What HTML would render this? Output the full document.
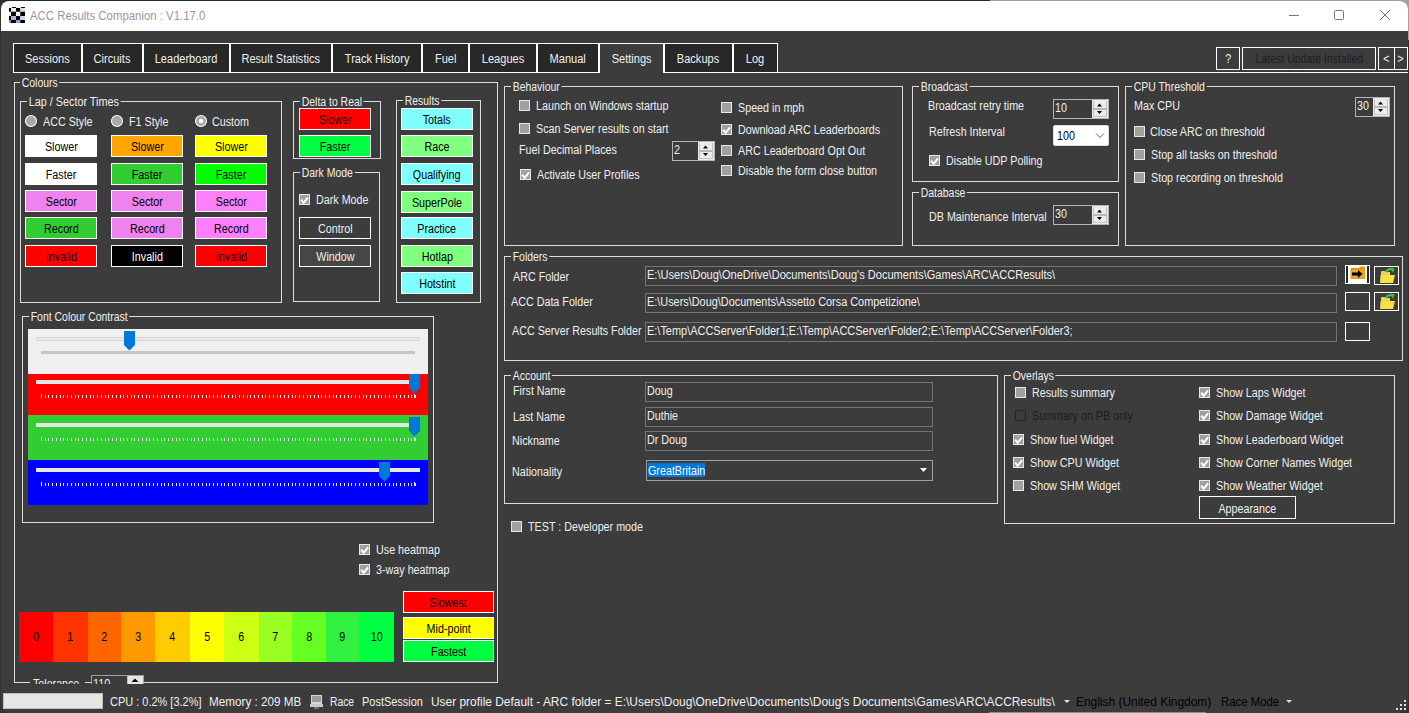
<!DOCTYPE html><html><head><meta charset="utf-8"><style>
html,body{margin:0;padding:0;width:1409px;height:713px;overflow:hidden;background:#2a2e33}
#w div{position:absolute}
.t{white-space:nowrap;font-family:"Liberation Sans",sans-serif;color:#f0f0f0;}
svg{position:absolute}
</style></head><body><div id="w" style="position:absolute;left:0;top:0;width:1409px;height:713px">
<div style="left:0px;top:0px;width:1409px;height:713px;background:#333"></div>
<div style="left:0px;top:0px;width:990px;height:1px;background:#262a26"></div>
<div style="left:990px;top:0px;width:419px;height:1px;background:#98a2b0"></div>
<div style="left:1389px;top:0px;width:20px;height:40px;background:#98a2b0"></div>
<div style="left:1px;top:1px;width:1407px;height:712px;background:#3c3c3c;border-radius:8px 8px 8px 8px;overflow:hidden"></div>
<div style="left:1px;top:1px;width:1407px;height:30px;background:#fff;border-radius:8px 8px 0 0"></div>
<svg style="left:9px;top:7px" width="16" height="16"><rect width="16" height="16" fill="#eef0fa"/><rect x="0" y="1" width="2" height="3.7" fill="#000"/><rect x="7" y="1" width="4.3" height="3.7" fill="#000"/><rect x="3" y="0" width="4" height="1" fill="#111"/><rect x="12" y="0" width="4" height="1" fill="#111"/><rect x="11.3" y="1" width="4.7" height="3.7" fill="#d4def0"/><rect x="2" y="4.7" width="5" height="4.3" fill="#000"/><rect x="11.3" y="4.7" width="4.7" height="4.3" fill="#000"/><rect x="0" y="9" width="2" height="4" fill="#000"/><rect x="7" y="9" width="4.3" height="4" fill="#000"/><rect x="2" y="9" width="5" height="4" fill="#a8b8cc"/><rect x="11.3" y="9" width="4.7" height="4" fill="#c8d8f0"/><rect x="0" y="13" width="2" height="3" fill="#7898b8"/><rect x="2" y="13" width="5" height="3" fill="#000"/><rect x="7" y="13" width="4.3" height="3" fill="#90a8c0"/><rect x="11.3" y="13" width="4.7" height="3" fill="#000"/></svg>
<div class="t" style="left:30px;top:8.0px;line-height:16px;font-size:12.5px;transform:scaleX(0.911);transform-origin:0 0;color:#999">ACC Results Companion : V1.17.0</div>
<div style="left:1289px;top:15px;width:10px;height:1px;background:#777"></div>
<div style="left:1334px;top:10px;width:10px;height:10px;border:1px solid #777;box-sizing:border-box;border-radius:1.5px"></div>
<svg style="left:1379px;top:9px" width="12" height="12"><path d="M1 1 L11 11 M11 1 L1 11" stroke="#777" stroke-width="1"/></svg>
<div style="left:13px;top:72px;width:1395px;height:1px;background:#fff"></div>
<div style="left:13px;top:43px;width:69px;height:30px;background:#282828;border:1px solid #fff;box-sizing:border-box"></div>
<div class="t" style="left:13px;width:69px;text-align:center;top:51.0px;line-height:16px;font-size:12px;"><span style="display:inline-block;transform:scaleX(0.92)">Sessions</span></div>
<div style="left:82px;top:43px;width:61px;height:30px;background:#282828;border:1px solid #fff;box-sizing:border-box"></div>
<div class="t" style="left:82px;width:61px;text-align:center;top:51.0px;line-height:16px;font-size:12px;"><span style="display:inline-block;transform:scaleX(0.92)">Circuits</span></div>
<div style="left:143px;top:43px;width:87px;height:30px;background:#282828;border:1px solid #fff;box-sizing:border-box"></div>
<div class="t" style="left:143px;width:87px;text-align:center;top:51.0px;line-height:16px;font-size:12px;"><span style="display:inline-block;transform:scaleX(0.92)">Leaderboard</span></div>
<div style="left:230px;top:43px;width:102px;height:30px;background:#282828;border:1px solid #fff;box-sizing:border-box"></div>
<div class="t" style="left:230px;width:102px;text-align:center;top:51.0px;line-height:16px;font-size:12px;"><span style="display:inline-block;transform:scaleX(0.92)">Result Statistics</span></div>
<div style="left:332px;top:43px;width:90px;height:30px;background:#282828;border:1px solid #fff;box-sizing:border-box"></div>
<div class="t" style="left:332px;width:90px;text-align:center;top:51.0px;line-height:16px;font-size:12px;"><span style="display:inline-block;transform:scaleX(0.92)">Track History</span></div>
<div style="left:422px;top:43px;width:47px;height:30px;background:#282828;border:1px solid #fff;box-sizing:border-box"></div>
<div class="t" style="left:422px;width:47px;text-align:center;top:51.0px;line-height:16px;font-size:12px;"><span style="display:inline-block;transform:scaleX(0.92)">Fuel</span></div>
<div style="left:469px;top:43px;width:68px;height:30px;background:#282828;border:1px solid #fff;box-sizing:border-box"></div>
<div class="t" style="left:469px;width:68px;text-align:center;top:51.0px;line-height:16px;font-size:12px;"><span style="display:inline-block;transform:scaleX(0.92)">Leagues</span></div>
<div style="left:537px;top:43px;width:62px;height:30px;background:#282828;border:1px solid #fff;box-sizing:border-box"></div>
<div class="t" style="left:537px;width:62px;text-align:center;top:51.0px;line-height:16px;font-size:12px;"><span style="display:inline-block;transform:scaleX(0.92)">Manual</span></div>
<div style="left:599px;top:43px;width:65px;height:30px;background:#3c3c3c;border:1px solid #fff;border-bottom:none;box-sizing:border-box"></div>
<div class="t" style="left:599px;width:65px;text-align:center;top:51.0px;line-height:16px;font-size:12px;"><span style="display:inline-block;transform:scaleX(0.92)">Settings</span></div>
<div style="left:664px;top:43px;width:69px;height:30px;background:#282828;border:1px solid #fff;box-sizing:border-box"></div>
<div class="t" style="left:664px;width:69px;text-align:center;top:51.0px;line-height:16px;font-size:12px;"><span style="display:inline-block;transform:scaleX(0.92)">Backups</span></div>
<div style="left:733px;top:43px;width:45px;height:30px;background:#282828;border:1px solid #fff;box-sizing:border-box"></div>
<div class="t" style="left:733px;width:45px;text-align:center;top:51.0px;line-height:16px;font-size:12px;"><span style="display:inline-block;transform:scaleX(0.92)">Log</span></div>
<div style="left:1216px;top:47px;width:24px;height:23px;border:1px solid #fff;box-sizing:border-box"></div>
<div class="t" style="left:1216px;width:24px;text-align:center;top:51.0px;line-height:16px;font-size:12px;"><span style="display:inline-block;transform:scaleX(0.895)">?</span></div>
<div style="left:1242px;top:47px;width:134px;height:23px;border:1px solid #fff;box-sizing:border-box"></div>
<div class="t" style="left:1242px;width:134px;text-align:center;top:51.0px;line-height:16px;font-size:12px;color:#1e1e1e"><span style="display:inline-block;transform:scaleX(0.875)">Latest Update Installed</span></div>
<div style="left:1378px;top:47px;width:17px;height:23px;border:1px solid #fff;box-sizing:border-box"></div>
<div style="left:1394px;top:47px;width:14px;height:23px;border:1px solid #fff;box-sizing:border-box"></div>
<div class="t" style="left:1378px;width:17px;text-align:center;top:51.0px;line-height:16px;font-size:12px;"><span style="display:inline-block;transform:scaleX(0.895)">&lt;</span></div>
<div class="t" style="left:1394px;width:14px;text-align:center;top:51.0px;line-height:16px;font-size:12px;"><span style="display:inline-block;transform:scaleX(0.895)">&gt;</span></div>
<div style="left:14px;top:82px;width:484px;height:601px;border:1px solid #dcdcdc;border-bottom:none;box-sizing:border-box"></div>
<div class="t" style="left:20px;top:75.0px;line-height:16px;font-size:12px;transform:scaleX(0.87);transform-origin:0 0;"><span style="background:#3c3c3c;padding:0 2px">Colours</span></div>
<div style="left:20px;top:101px;width:262px;height:202px;border:1px solid #dcdcdc;box-sizing:border-box"></div>
<div class="t" style="left:27px;top:94.0px;line-height:16px;font-size:12px;transform:scaleX(0.9);transform-origin:0 0;"><span style="background:#3c3c3c;padding:0 2px">Lap / Sector Times</span></div>
<svg style="position:absolute;left:24px;top:114px" width="14" height="14"><circle cx="7" cy="7" r="5.5" fill="#a8a8a8" stroke="#fff" stroke-width="1.1"/></svg>
<div class="t" style="left:43px;top:114.0px;line-height:16px;font-size:12px;transform:scaleX(0.895);transform-origin:0 0;">ACC Style</div>
<svg style="position:absolute;left:110px;top:114px" width="14" height="14"><circle cx="7" cy="7" r="5.5" fill="#a8a8a8" stroke="#fff" stroke-width="1.1"/></svg>
<div class="t" style="left:129px;top:114.0px;line-height:16px;font-size:12px;transform:scaleX(0.895);transform-origin:0 0;">F1 Style</div>
<svg style="position:absolute;left:194px;top:114px" width="14" height="14"><circle cx="7" cy="7" r="5.5" fill="#a8a8a8" stroke="#fff" stroke-width="1.1"/><circle cx="7" cy="7" r="2.2" fill="#fff"/></svg>
<div class="t" style="left:212px;top:114.0px;line-height:16px;font-size:12px;transform:scaleX(0.895);transform-origin:0 0;">Custom</div>
<div style="left:25px;top:135px;width:72px;height:22px;background:#ffffff;border:1px solid #fff;box-sizing:border-box"></div>
<div class="t" style="left:25px;width:72px;text-align:center;top:139.0px;line-height:16px;font-size:12px;color:#000"><span style="display:inline-block;transform:scaleX(0.895)">Slower</span></div>
<div style="left:25px;top:163px;width:72px;height:22px;background:#ffffff;border:1px solid #fff;box-sizing:border-box"></div>
<div class="t" style="left:25px;width:72px;text-align:center;top:167.0px;line-height:16px;font-size:12px;color:#000"><span style="display:inline-block;transform:scaleX(0.895)">Faster</span></div>
<div style="left:25px;top:190px;width:72px;height:22px;background:#ee82ee;border:1px solid #fff;box-sizing:border-box"></div>
<div class="t" style="left:25px;width:72px;text-align:center;top:194.0px;line-height:16px;font-size:12px;color:#000"><span style="display:inline-block;transform:scaleX(0.895)">Sector</span></div>
<div style="left:25px;top:217px;width:72px;height:22px;background:#32cd32;border:1px solid #fff;box-sizing:border-box"></div>
<div class="t" style="left:25px;width:72px;text-align:center;top:221.0px;line-height:16px;font-size:12px;color:#000"><span style="display:inline-block;transform:scaleX(0.895)">Record</span></div>
<div style="left:25px;top:245px;width:72px;height:22px;background:#ff0000;border:1px solid #fff;box-sizing:border-box"></div>
<div class="t" style="left:25px;width:72px;text-align:center;top:249.0px;line-height:16px;font-size:12px;color:#000"><span style="display:inline-block;transform:scaleX(0.895)">Invalid</span></div>
<div style="left:111px;top:135px;width:72px;height:22px;background:#ffa500;border:1px solid #fff;box-sizing:border-box"></div>
<div class="t" style="left:111px;width:72px;text-align:center;top:139.0px;line-height:16px;font-size:12px;color:#000"><span style="display:inline-block;transform:scaleX(0.895)">Slower</span></div>
<div style="left:111px;top:163px;width:72px;height:22px;background:#32cd32;border:1px solid #fff;box-sizing:border-box"></div>
<div class="t" style="left:111px;width:72px;text-align:center;top:167.0px;line-height:16px;font-size:12px;color:#000"><span style="display:inline-block;transform:scaleX(0.895)">Faster</span></div>
<div style="left:111px;top:190px;width:72px;height:22px;background:#ee82ee;border:1px solid #fff;box-sizing:border-box"></div>
<div class="t" style="left:111px;width:72px;text-align:center;top:194.0px;line-height:16px;font-size:12px;color:#000"><span style="display:inline-block;transform:scaleX(0.895)">Sector</span></div>
<div style="left:111px;top:217px;width:72px;height:22px;background:#ee82ee;border:1px solid #fff;box-sizing:border-box"></div>
<div class="t" style="left:111px;width:72px;text-align:center;top:221.0px;line-height:16px;font-size:12px;color:#000"><span style="display:inline-block;transform:scaleX(0.895)">Record</span></div>
<div style="left:111px;top:245px;width:72px;height:22px;background:#000000;border:1px solid #fff;box-sizing:border-box"></div>
<div class="t" style="left:111px;width:72px;text-align:center;top:249.0px;line-height:16px;font-size:12px;color:#fff"><span style="display:inline-block;transform:scaleX(0.895)">Invalid</span></div>
<div style="left:195px;top:135px;width:72px;height:22px;background:#ffff00;border:1px solid #fff;box-sizing:border-box"></div>
<div class="t" style="left:195px;width:72px;text-align:center;top:139.0px;line-height:16px;font-size:12px;color:#000"><span style="display:inline-block;transform:scaleX(0.895)">Slower</span></div>
<div style="left:195px;top:163px;width:72px;height:22px;background:#00ff00;border:1px solid #fff;box-sizing:border-box"></div>
<div class="t" style="left:195px;width:72px;text-align:center;top:167.0px;line-height:16px;font-size:12px;color:#000"><span style="display:inline-block;transform:scaleX(0.895)">Faster</span></div>
<div style="left:195px;top:190px;width:72px;height:22px;background:#ff80ff;border:1px solid #fff;box-sizing:border-box"></div>
<div class="t" style="left:195px;width:72px;text-align:center;top:194.0px;line-height:16px;font-size:12px;color:#000"><span style="display:inline-block;transform:scaleX(0.895)">Sector</span></div>
<div style="left:195px;top:217px;width:72px;height:22px;background:#ff80ff;border:1px solid #fff;box-sizing:border-box"></div>
<div class="t" style="left:195px;width:72px;text-align:center;top:221.0px;line-height:16px;font-size:12px;color:#000"><span style="display:inline-block;transform:scaleX(0.895)">Record</span></div>
<div style="left:195px;top:245px;width:72px;height:22px;background:#ff0000;border:1px solid #fff;box-sizing:border-box"></div>
<div class="t" style="left:195px;width:72px;text-align:center;top:249.0px;line-height:16px;font-size:12px;color:#000"><span style="display:inline-block;transform:scaleX(0.895)">Invalid</span></div>
<div style="left:293px;top:101px;width:88px;height:58px;border:1px solid #dcdcdc;box-sizing:border-box"></div>
<div class="t" style="left:300px;top:94.0px;line-height:16px;font-size:12px;transform:scaleX(0.87);transform-origin:0 0;"><span style="background:#3c3c3c;padding:0 2px">Delta to Real</span></div>
<div style="left:299px;top:108px;width:72px;height:22px;background:#ff0000;border:1px solid #fff;box-sizing:border-box"></div>
<div class="t" style="left:299px;width:72px;text-align:center;top:112.0px;line-height:16px;font-size:12px;color:#000"><span style="display:inline-block;transform:scaleX(0.895)">Slower</span></div>
<div style="left:299px;top:135px;width:72px;height:22px;background:#00ff40;border:1px solid #fff;box-sizing:border-box"></div>
<div class="t" style="left:299px;width:72px;text-align:center;top:139.0px;line-height:16px;font-size:12px;color:#000"><span style="display:inline-block;transform:scaleX(0.895)">Faster</span></div>
<div style="left:293px;top:172px;width:87px;height:130px;border:1px solid #dcdcdc;box-sizing:border-box"></div>
<div class="t" style="left:300px;top:165.0px;line-height:16px;font-size:12px;transform:scaleX(0.87);transform-origin:0 0;"><span style="background:#3c3c3c;padding:0 2px">Dark Mode</span></div>
<div style="left:299px;top:194px;width:11px;height:11px;background:#a0a0a0;border:1px solid #e8e8e8;box-sizing:border-box"></div>
<svg style="position:absolute;left:299px;top:194px" width="11" height="11"><path d="M2.2 5.6 L4.6 8.8 L9 3.3" stroke="#fff" stroke-width="2" fill="none"/></svg>
<div class="t" style="left:316px;top:192.0px;line-height:16px;font-size:12px;transform:scaleX(0.895);transform-origin:0 0;">Dark Mode</div>
<div style="left:299px;top:217px;width:72px;height:22px;background:#3c3c3c;border:1px solid #fff;box-sizing:border-box"></div>
<div class="t" style="left:299px;width:72px;text-align:center;top:221.0px;line-height:16px;font-size:12px;color:#f0f0f0"><span style="display:inline-block;transform:scaleX(0.895)">Control</span></div>
<div style="left:299px;top:245px;width:72px;height:22px;background:#464646;border:1px solid #fff;box-sizing:border-box"></div>
<div class="t" style="left:299px;width:72px;text-align:center;top:249.0px;line-height:16px;font-size:12px;color:#f0f0f0"><span style="display:inline-block;transform:scaleX(0.895)">Window</span></div>
<div style="left:396px;top:100px;width:85px;height:203px;border:1px solid #dcdcdc;box-sizing:border-box"></div>
<div class="t" style="left:403px;top:93.0px;line-height:16px;font-size:12px;transform:scaleX(0.87);transform-origin:0 0;"><span style="background:#3c3c3c;padding:0 2px">Results</span></div>
<div style="left:401px;top:108px;width:72px;height:22px;background:#80ffff;border:1px solid #fff;box-sizing:border-box"></div>
<div class="t" style="left:401px;width:72px;text-align:center;top:112.0px;line-height:16px;font-size:12px;color:#000"><span style="display:inline-block;transform:scaleX(0.895)">Totals</span></div>
<div style="left:401px;top:135px;width:72px;height:22px;background:#80ff80;border:1px solid #fff;box-sizing:border-box"></div>
<div class="t" style="left:401px;width:72px;text-align:center;top:139.0px;line-height:16px;font-size:12px;color:#000"><span style="display:inline-block;transform:scaleX(0.895)">Race</span></div>
<div style="left:401px;top:163px;width:72px;height:22px;background:#80ffff;border:1px solid #fff;box-sizing:border-box"></div>
<div class="t" style="left:401px;width:72px;text-align:center;top:167.0px;line-height:16px;font-size:12px;color:#000"><span style="display:inline-block;transform:scaleX(0.895)">Qualifying</span></div>
<div style="left:401px;top:191px;width:72px;height:22px;background:#80ff80;border:1px solid #fff;box-sizing:border-box"></div>
<div class="t" style="left:401px;width:72px;text-align:center;top:195.0px;line-height:16px;font-size:12px;color:#000"><span style="display:inline-block;transform:scaleX(0.895)">SuperPole</span></div>
<div style="left:401px;top:217px;width:72px;height:22px;background:#80ffff;border:1px solid #fff;box-sizing:border-box"></div>
<div class="t" style="left:401px;width:72px;text-align:center;top:221.0px;line-height:16px;font-size:12px;color:#000"><span style="display:inline-block;transform:scaleX(0.895)">Practice</span></div>
<div style="left:401px;top:245px;width:72px;height:22px;background:#80ff80;border:1px solid #fff;box-sizing:border-box"></div>
<div class="t" style="left:401px;width:72px;text-align:center;top:249.0px;line-height:16px;font-size:12px;color:#000"><span style="display:inline-block;transform:scaleX(0.895)">Hotlap</span></div>
<div style="left:401px;top:272px;width:72px;height:22px;background:#80ffff;border:1px solid #fff;box-sizing:border-box"></div>
<div class="t" style="left:401px;width:72px;text-align:center;top:276.0px;line-height:16px;font-size:12px;color:#000"><span style="display:inline-block;transform:scaleX(0.895)">Hotstint</span></div>
<div style="left:22px;top:316px;width:412px;height:207px;border:1px solid #dcdcdc;box-sizing:border-box"></div>
<div class="t" style="left:29px;top:309.0px;line-height:16px;font-size:12px;transform:scaleX(0.87);transform-origin:0 0;"><span style="background:#3c3c3c;padding:0 2px">Font Colour Contrast</span></div>
<div style="left:28px;top:329px;width:400px;height:45px;background:#f0f0f0"></div>
<div style="left:28px;top:374px;width:400px;height:41px;background:#ff0000"></div>
<div style="left:28px;top:415px;width:400px;height:45px;background:#32cd32"></div>
<div style="left:28px;top:460px;width:400px;height:45px;background:#0000ff"></div>
<div style="left:36px;top:337px;width:384px;height:4px;background:#e7e7e7;border:1px solid #d6d6d6;box-sizing:border-box"></div>
<div style="left:41px;top:351px;width:374px;height:3px;background:#c4c4c4"></div>
<svg style="left:124px;top:331px" width="11" height="20"><path d="M0 0 H11 V14 L5.5 19.5 L0 14 Z" fill="#0078d7"/></svg>
<div style="left:36px;top:380px;width:384px;height:4px;background:#e4e8e8"></div>
<div style="left:41px;top:395px;width:375px;height:3px;background:repeating-linear-gradient(90deg,#e8ecec 0 1px,transparent 1px 3.74px)"></div>
<div style="left:41px;top:394px;width:1px;height:4px;background:#e8ecec"></div>
<div style="left:414px;top:394px;width:1px;height:4px;background:#e8ecec"></div>
<div style="left:36px;top:423px;width:384px;height:4px;background:#e4e8e8"></div>
<div style="left:41px;top:438px;width:375px;height:3px;background:repeating-linear-gradient(90deg,#e8ecec 0 1px,transparent 1px 3.74px)"></div>
<div style="left:41px;top:437px;width:1px;height:4px;background:#e8ecec"></div>
<div style="left:414px;top:437px;width:1px;height:4px;background:#e8ecec"></div>
<div style="left:36px;top:468px;width:384px;height:4px;background:#e4e8e8"></div>
<div style="left:41px;top:483px;width:375px;height:3px;background:repeating-linear-gradient(90deg,#e8ecec 0 1px,transparent 1px 3.74px)"></div>
<div style="left:41px;top:482px;width:1px;height:4px;background:#e8ecec"></div>
<div style="left:414px;top:482px;width:1px;height:4px;background:#e8ecec"></div>
<svg style="left:409px;top:374px" width="11" height="20"><path d="M0 0 H11 V14 L5.5 19.5 L0 14 Z" fill="#0078d7"/></svg>
<svg style="left:409px;top:417px" width="11" height="20"><path d="M0 0 H11 V14 L5.5 19.5 L0 14 Z" fill="#0078d7"/></svg>
<svg style="left:379px;top:462px" width="11" height="20"><path d="M0 0 H11 V14 L5.5 19.5 L0 14 Z" fill="#0078d7"/></svg>
<div style="left:359px;top:544px;width:11px;height:11px;background:#a0a0a0;border:1px solid #e8e8e8;box-sizing:border-box"></div>
<svg style="position:absolute;left:359px;top:544px" width="11" height="11"><path d="M2.2 5.6 L4.6 8.8 L9 3.3" stroke="#fff" stroke-width="2" fill="none"/></svg>
<div class="t" style="left:376px;top:542.0px;line-height:16px;font-size:12px;transform:scaleX(0.895);transform-origin:0 0;">Use heatmap</div>
<div style="left:359px;top:564px;width:11px;height:11px;background:#a0a0a0;border:1px solid #e8e8e8;box-sizing:border-box"></div>
<svg style="position:absolute;left:359px;top:564px" width="11" height="11"><path d="M2.2 5.6 L4.6 8.8 L9 3.3" stroke="#fff" stroke-width="2" fill="none"/></svg>
<div class="t" style="left:376px;top:562.0px;line-height:16px;font-size:12px;transform:scaleX(0.895);transform-origin:0 0;">3-way heatmap</div>
<div style="left:19px;top:612px;width:34px;height:50px;background:#ff0000"></div>
<div class="t" style="left:19px;width:34px;text-align:center;top:629.0px;line-height:16px;font-size:12px;color:#000"><span style="display:inline-block;transform:scaleX(0.895)">0</span></div>
<div style="left:53px;top:612px;width:35px;height:50px;background:#ff3300"></div>
<div class="t" style="left:53px;width:35px;text-align:center;top:629.0px;line-height:16px;font-size:12px;color:#000"><span style="display:inline-block;transform:scaleX(0.895)">1</span></div>
<div style="left:88px;top:612px;width:33px;height:50px;background:#ff6600"></div>
<div class="t" style="left:88px;width:33px;text-align:center;top:629.0px;line-height:16px;font-size:12px;color:#000"><span style="display:inline-block;transform:scaleX(0.895)">2</span></div>
<div style="left:121px;top:612px;width:34px;height:50px;background:#ff9900"></div>
<div class="t" style="left:121px;width:34px;text-align:center;top:629.0px;line-height:16px;font-size:12px;color:#000"><span style="display:inline-block;transform:scaleX(0.895)">3</span></div>
<div style="left:155px;top:612px;width:35px;height:50px;background:#ffcc00"></div>
<div class="t" style="left:155px;width:35px;text-align:center;top:629.0px;line-height:16px;font-size:12px;color:#000"><span style="display:inline-block;transform:scaleX(0.895)">4</span></div>
<div style="left:190px;top:612px;width:34px;height:50px;background:#ffff00"></div>
<div class="t" style="left:190px;width:34px;text-align:center;top:629.0px;line-height:16px;font-size:12px;color:#000"><span style="display:inline-block;transform:scaleX(0.895)">5</span></div>
<div style="left:224px;top:612px;width:35px;height:50px;background:#ccff11"></div>
<div class="t" style="left:224px;width:35px;text-align:center;top:629.0px;line-height:16px;font-size:12px;color:#000"><span style="display:inline-block;transform:scaleX(0.895)">6</span></div>
<div style="left:259px;top:612px;width:33px;height:50px;background:#99ff22"></div>
<div class="t" style="left:259px;width:33px;text-align:center;top:629.0px;line-height:16px;font-size:12px;color:#000"><span style="display:inline-block;transform:scaleX(0.895)">7</span></div>
<div style="left:292px;top:612px;width:34px;height:50px;background:#66ff22"></div>
<div class="t" style="left:292px;width:34px;text-align:center;top:629.0px;line-height:16px;font-size:12px;color:#000"><span style="display:inline-block;transform:scaleX(0.895)">8</span></div>
<div style="left:326px;top:612px;width:33px;height:50px;background:#30f040"></div>
<div class="t" style="left:326px;width:33px;text-align:center;top:629.0px;line-height:16px;font-size:12px;color:#000"><span style="display:inline-block;transform:scaleX(0.895)">9</span></div>
<div style="left:359px;top:612px;width:35px;height:50px;background:#00ff40"></div>
<div class="t" style="left:359px;width:35px;text-align:center;top:629.0px;line-height:16px;font-size:12px;color:#000"><span style="display:inline-block;transform:scaleX(0.895)">10</span></div>
<div style="left:403px;top:591px;width:91px;height:22px;background:#ff0000;border:1px solid #fff;box-sizing:border-box"></div>
<div class="t" style="left:403px;width:91px;text-align:center;top:595.0px;line-height:16px;font-size:12px;color:#000"><span style="display:inline-block;transform:scaleX(0.895)">Slowest</span></div>
<div style="left:403px;top:617px;width:91px;height:22px;background:#ffff00;border:1px solid #fff;box-sizing:border-box"></div>
<div class="t" style="left:403px;width:91px;text-align:center;top:621.0px;line-height:16px;font-size:12px;color:#000"><span style="display:inline-block;transform:scaleX(0.895)">Mid-point</span></div>
<div style="left:403px;top:640px;width:91px;height:22px;background:#00ff40;border:1px solid #fff;box-sizing:border-box"></div>
<div class="t" style="left:403px;width:91px;text-align:center;top:644.0px;line-height:16px;font-size:12px;color:#000"><span style="display:inline-block;transform:scaleX(0.895)">Fastest</span></div>
<div style="left:0;top:668px;width:500px;height:16px;overflow:hidden">
<div style="left:14px;top:0;width:1px;height:15px;background:#dcdcdc"></div>
<div style="left:14px;top:14px;width:16px;height:1px;background:#dcdcdc"></div>
<div class="t" style="left:33px;top:8px;line-height:16px;font-size:12px;transform:scaleX(0.89);transform-origin:0 0">Tolerance</div>
<div style="left:85px;top:14px;width:6px;height:1px;background:#dcdcdc"></div>
<div style="left:143px;top:14px;width:354px;height:1px;background:#dcdcdc"></div>
<div style="left:497px;top:0;width:1px;height:15px;background:#dcdcdc"></div>
<div style="left:91px;top:7px;width:53px;height:12px;border:1px solid #a0a0a0;box-sizing:border-box"></div>
<div class="t" style="left:93px;top:8px;line-height:16px;font-size:12px;transform:scaleX(0.91);transform-origin:0 0">110</div>
<div style="left:127px;top:8px;width:16px;height:10px;background:#e6e6e6;border-left:1px solid #bbb;box-sizing:border-box"></div>
<svg style="left:127px;top:8px" width="16" height="10"><path d="M4.5 6 L8 2.5 L11.5 6 Z" fill="#000"/></svg>
</div>
<div style="left:504px;top:86px;width:399px;height:160px;border:1px solid #dcdcdc;box-sizing:border-box"></div>
<div class="t" style="left:511px;top:79.0px;line-height:16px;font-size:12px;transform:scaleX(0.87);transform-origin:0 0;"><span style="background:#3c3c3c;padding:0 2px">Behaviour</span></div>
<div style="left:519px;top:100px;width:11px;height:11px;background:#a0a0a0;border:1px solid #e8e8e8;box-sizing:border-box"></div>
<div class="t" style="left:536px;top:98.0px;line-height:16px;font-size:12px;transform:scaleX(0.895);transform-origin:0 0;">Launch on Windows startup</div>
<div style="left:519px;top:123px;width:11px;height:11px;background:#a0a0a0;border:1px solid #e8e8e8;box-sizing:border-box"></div>
<div class="t" style="left:536px;top:121.0px;line-height:16px;font-size:12px;transform:scaleX(0.895);transform-origin:0 0;">Scan Server results on start</div>
<div class="t" style="left:519px;top:142.0px;line-height:16px;font-size:12px;transform:scaleX(0.895);transform-origin:0 0;">Fuel Decimal Places</div>
<div style="left:672px;top:141px;width:43px;height:20px;background:#3c3c3c;border:1px solid #b4b4b4;box-sizing:border-box"></div>
<div class="t" style="left:674px;top:142.0px;line-height:16px;font-size:12px;transform:scaleX(0.895);transform-origin:0 0;">2</div>
<svg style="left:698px;top:141px" width="17" height="20"><rect x="0" y="1" width="16" height="18" fill="#ececec"/><rect x="1" y="2" width="1" height="16" fill="#c0c0c0"/><rect x="14" y="2" width="1" height="16" fill="#c0c0c0"/><rect x="1" y="9.0" width="14" height="2" fill="#b8b8b8"/><rect x="1" y="17" width="14" height="1" fill="#c8c8c8"/><path d="M5 7.5 L7.5 4.5 L10 7.5 Z M5 12.0 L7.5 15.0 L10 12.0 Z" fill="#000"/></svg>
<div style="left:520px;top:169px;width:11px;height:11px;background:#a0a0a0;border:1px solid #e8e8e8;box-sizing:border-box"></div>
<svg style="position:absolute;left:520px;top:169px" width="11" height="11"><path d="M2.2 5.6 L4.6 8.8 L9 3.3" stroke="#fff" stroke-width="2" fill="none"/></svg>
<div class="t" style="left:537px;top:167.0px;line-height:16px;font-size:12px;transform:scaleX(0.895);transform-origin:0 0;">Activate User Profiles</div>
<div style="left:721px;top:102px;width:11px;height:11px;background:#a0a0a0;border:1px solid #e8e8e8;box-sizing:border-box"></div>
<div class="t" style="left:738px;top:100.0px;line-height:16px;font-size:12px;transform:scaleX(0.895);transform-origin:0 0;">Speed in mph</div>
<div style="left:721px;top:124px;width:11px;height:11px;background:#a0a0a0;border:1px solid #e8e8e8;box-sizing:border-box"></div>
<svg style="position:absolute;left:721px;top:124px" width="11" height="11"><path d="M2.2 5.6 L4.6 8.8 L9 3.3" stroke="#fff" stroke-width="2" fill="none"/></svg>
<div class="t" style="left:738px;top:122.0px;line-height:16px;font-size:12px;transform:scaleX(0.895);transform-origin:0 0;">Download ARC Leaderboards</div>
<div style="left:721px;top:145px;width:11px;height:11px;background:#a0a0a0;border:1px solid #e8e8e8;box-sizing:border-box"></div>
<div class="t" style="left:738px;top:143.0px;line-height:16px;font-size:12px;transform:scaleX(0.895);transform-origin:0 0;">ARC Leaderboard Opt Out</div>
<div style="left:721px;top:165px;width:11px;height:11px;background:#a0a0a0;border:1px solid #e8e8e8;box-sizing:border-box"></div>
<div class="t" style="left:738px;top:163.0px;line-height:16px;font-size:12px;transform:scaleX(0.895);transform-origin:0 0;">Disable the form close button</div>
<div style="left:912px;top:86px;width:207px;height:96px;border:1px solid #dcdcdc;box-sizing:border-box"></div>
<div class="t" style="left:919px;top:79.0px;line-height:16px;font-size:12px;transform:scaleX(0.87);transform-origin:0 0;"><span style="background:#3c3c3c;padding:0 2px">Broadcast</span></div>
<div class="t" style="left:928px;top:98.0px;line-height:16px;font-size:12px;transform:scaleX(0.895);transform-origin:0 0;">Broadcast retry time</div>
<div style="left:1053px;top:99px;width:56px;height:20px;background:#3c3c3c;border:1px solid #b4b4b4;box-sizing:border-box"></div>
<div class="t" style="left:1055px;top:100.0px;line-height:16px;font-size:12px;transform:scaleX(0.895);transform-origin:0 0;">10</div>
<svg style="left:1092px;top:99px" width="17" height="20"><rect x="0" y="1" width="16" height="18" fill="#ececec"/><rect x="1" y="2" width="1" height="16" fill="#c0c0c0"/><rect x="14" y="2" width="1" height="16" fill="#c0c0c0"/><rect x="1" y="9.0" width="14" height="2" fill="#b8b8b8"/><rect x="1" y="17" width="14" height="1" fill="#c8c8c8"/><path d="M5 7.5 L7.5 4.5 L10 7.5 Z M5 12.0 L7.5 15.0 L10 12.0 Z" fill="#000"/></svg>
<div class="t" style="left:929px;top:124.0px;line-height:16px;font-size:12px;transform:scaleX(0.895);transform-origin:0 0;">Refresh Interval</div>
<div style="left:1053px;top:125px;width:56px;height:21px;background:#fff;border:1px solid #ddd;box-sizing:border-box;border-radius:2px"></div>
<div class="t" style="left:1057px;top:127.5px;line-height:16px;font-size:12px;transform:scaleX(0.895);transform-origin:0 0;color:#000">100</div>
<svg style="left:1095px;top:132px" width="10" height="8"><path d="M1 1.5 L5 5.5 L9 1.5" stroke="#606060" stroke-width="1" fill="none"/></svg>
<div style="left:929px;top:155px;width:11px;height:11px;background:#a0a0a0;border:1px solid #e8e8e8;box-sizing:border-box"></div>
<svg style="position:absolute;left:929px;top:155px" width="11" height="11"><path d="M2.2 5.6 L4.6 8.8 L9 3.3" stroke="#fff" stroke-width="2" fill="none"/></svg>
<div class="t" style="left:946px;top:153.0px;line-height:16px;font-size:12px;transform:scaleX(0.895);transform-origin:0 0;">Disable UDP Polling</div>
<div style="left:912px;top:192px;width:207px;height:54px;border:1px solid #dcdcdc;box-sizing:border-box"></div>
<div class="t" style="left:919px;top:185.0px;line-height:16px;font-size:12px;transform:scaleX(0.87);transform-origin:0 0;"><span style="background:#3c3c3c;padding:0 2px">Database</span></div>
<div class="t" style="left:929px;top:208.5px;line-height:16px;font-size:12px;transform:scaleX(0.895);transform-origin:0 0;">DB Maintenance Interval</div>
<div style="left:1053px;top:205px;width:56px;height:20px;background:#3c3c3c;border:1px solid #b4b4b4;box-sizing:border-box"></div>
<div class="t" style="left:1055px;top:206.0px;line-height:16px;font-size:12px;transform:scaleX(0.895);transform-origin:0 0;">30</div>
<svg style="left:1092px;top:205px" width="17" height="20"><rect x="0" y="1" width="16" height="18" fill="#ececec"/><rect x="1" y="2" width="1" height="16" fill="#c0c0c0"/><rect x="14" y="2" width="1" height="16" fill="#c0c0c0"/><rect x="1" y="9.0" width="14" height="2" fill="#b8b8b8"/><rect x="1" y="17" width="14" height="1" fill="#c8c8c8"/><path d="M5 7.5 L7.5 4.5 L10 7.5 Z M5 12.0 L7.5 15.0 L10 12.0 Z" fill="#000"/></svg>
<div style="left:1125px;top:86px;width:270px;height:160px;border:1px solid #dcdcdc;box-sizing:border-box"></div>
<div class="t" style="left:1132px;top:79.0px;line-height:16px;font-size:12px;transform:scaleX(0.87);transform-origin:0 0;"><span style="background:#3c3c3c;padding:0 2px">CPU Threshold</span></div>
<div class="t" style="left:1134px;top:98.0px;line-height:16px;font-size:12px;transform:scaleX(0.895);transform-origin:0 0;">Max CPU</div>
<div style="left:1355px;top:97px;width:35px;height:20px;background:#3c3c3c;border:1px solid #b4b4b4;box-sizing:border-box"></div>
<div class="t" style="left:1357px;top:98.0px;line-height:16px;font-size:12px;transform:scaleX(0.895);transform-origin:0 0;">30</div>
<svg style="left:1373px;top:97px" width="17" height="20"><rect x="0" y="1" width="16" height="18" fill="#ececec"/><rect x="1" y="2" width="1" height="16" fill="#c0c0c0"/><rect x="14" y="2" width="1" height="16" fill="#c0c0c0"/><rect x="1" y="9.0" width="14" height="2" fill="#b8b8b8"/><rect x="1" y="17" width="14" height="1" fill="#c8c8c8"/><path d="M5 7.5 L7.5 4.5 L10 7.5 Z M5 12.0 L7.5 15.0 L10 12.0 Z" fill="#000"/></svg>
<div style="left:1134px;top:126px;width:11px;height:11px;background:#a0a0a0;border:1px solid #e8e8e8;box-sizing:border-box"></div>
<div class="t" style="left:1150px;top:124.0px;line-height:16px;font-size:12px;transform:scaleX(0.895);transform-origin:0 0;">Close ARC on threshold</div>
<div style="left:1134px;top:149px;width:11px;height:11px;background:#a0a0a0;border:1px solid #e8e8e8;box-sizing:border-box"></div>
<div class="t" style="left:1151px;top:147.0px;line-height:16px;font-size:12px;transform:scaleX(0.895);transform-origin:0 0;">Stop all tasks on threshold</div>
<div style="left:1134px;top:172px;width:11px;height:11px;background:#a0a0a0;border:1px solid #e8e8e8;box-sizing:border-box"></div>
<div class="t" style="left:1151px;top:170.0px;line-height:16px;font-size:12px;transform:scaleX(0.895);transform-origin:0 0;">Stop recording on threshold</div>
<div style="left:504px;top:256px;width:899px;height:105px;border:1px solid #dcdcdc;box-sizing:border-box"></div>
<div class="t" style="left:511px;top:249.0px;line-height:16px;font-size:12px;transform:scaleX(0.87);transform-origin:0 0;"><span style="background:#3c3c3c;padding:0 2px">Folders</span></div>
<div class="t" style="left:513px;top:268.5px;line-height:16px;font-size:12px;transform:scaleX(0.895);transform-origin:0 0;">ARC Folder</div>
<div class="t" style="left:511px;top:293.5px;line-height:16px;font-size:12px;transform:scaleX(0.895);transform-origin:0 0;">ACC Data Folder</div>
<div class="t" style="left:512px;top:322.5px;line-height:16px;font-size:12px;transform:scaleX(0.895);transform-origin:0 0;">ACC Server Results Folder</div>
<div style="left:645px;top:266px;width:692px;height:20px;background:#3c3c3c;border:1px solid #747474;box-sizing:border-box"></div>
<div class="t" style="left:647px;top:267.0px;line-height:16px;font-size:12px;transform:scaleX(0.921);transform-origin:0 0;">E:\Users\Doug\OneDrive\Documents\Doug's Documents\Games\ARC\ACCResults\</div>
<div style="left:645px;top:293px;width:692px;height:20px;background:#3c3c3c;border:1px solid #747474;box-sizing:border-box"></div>
<div class="t" style="left:647px;top:294.0px;line-height:16px;font-size:12px;transform:scaleX(0.907);transform-origin:0 0;">E:\Users\Doug\Documents\Assetto Corsa Competizione\</div>
<div style="left:645px;top:322px;width:692px;height:20px;background:#3c3c3c;border:1px solid #747474;box-sizing:border-box"></div>
<div class="t" style="left:647px;top:323.0px;line-height:16px;font-size:12px;transform:scaleX(0.913);transform-origin:0 0;">E:\Temp\ACCServer\Folder1;E:\Temp\ACCServer\Folder2;E:\Temp\ACCServer\Folder3;</div>
<div style="left:1345px;top:265px;width:25px;height:19px;background:#fff;border:1px solid #fff;box-sizing:border-box"></div>
<div style="left:1346px;top:266px;width:2px;height:17px;background:#2a2a2a"></div>
<div style="left:1367px;top:266px;width:2px;height:17px;background:#2a2a2a"></div>
<div style="left:1345px;top:292px;width:25px;height:19px;border:1px solid #fff;box-sizing:border-box"></div>
<div style="left:1345px;top:322px;width:25px;height:19px;border:1px solid #fff;box-sizing:border-box"></div>
<svg style="left:1350px;top:266px" width="16" height="14"><path d="M0.5 3 Q0.5 2 1.5 2 H9 L10.5 0.5 H14 Q15 0.5 15 1.5 V12 Q15 13 14 13 H1.5 Q0.5 13 0.5 12 Z" fill="#e89418"/><path d="M1 4 H14.5 V12.5 H1 Z" fill="#f0a428"/><path d="M2 6.5 H8 V4 L12.5 8 L8 12 V9.5 H2 Z" fill="#000"/></svg>
<div style="left:1374px;top:266px;width:25px;height:19px;border:1px solid #fff;box-sizing:border-box"></div>
<svg style="left:1379px;top:267px" width="17" height="17"><path d="M2 5 Q2 4 3 4 H6 L7 5 H11 V15 H2 Z" fill="#f0d060"/><path d="M1.5 8 H16 L14 16 H1 Z" fill="#f8e040"/><path d="M7 5 Q9 1 13 2.5" stroke="#40c040" stroke-width="2.2" fill="none"/><path d="M11.5 0.5 L15.5 1.5 L14 6 Z" fill="#40c040"/></svg>
<div style="left:1374px;top:292px;width:25px;height:19px;border:1px solid #fff;box-sizing:border-box"></div>
<svg style="left:1379px;top:293px" width="17" height="17"><path d="M2 5 Q2 4 3 4 H6 L7 5 H11 V15 H2 Z" fill="#f0d060"/><path d="M1.5 8 H16 L14 16 H1 Z" fill="#f8e040"/><path d="M7 5 Q9 1 13 2.5" stroke="#40c040" stroke-width="2.2" fill="none"/><path d="M11.5 0.5 L15.5 1.5 L14 6 Z" fill="#40c040"/></svg>
<div style="left:504px;top:375px;width:494px;height:129px;border:1px solid #dcdcdc;box-sizing:border-box"></div>
<div class="t" style="left:511px;top:368.0px;line-height:16px;font-size:12px;transform:scaleX(0.87);transform-origin:0 0;"><span style="background:#3c3c3c;padding:0 2px">Account</span></div>
<div class="t" style="left:513px;top:383.0px;line-height:16px;font-size:12px;transform:scaleX(0.895);transform-origin:0 0;">First Name</div>
<div class="t" style="left:513px;top:409.0px;line-height:16px;font-size:12px;transform:scaleX(0.895);transform-origin:0 0;">Last Name</div>
<div class="t" style="left:512px;top:433.0px;line-height:16px;font-size:12px;transform:scaleX(0.895);transform-origin:0 0;">Nickname</div>
<div class="t" style="left:512px;top:463.5px;line-height:16px;font-size:12px;transform:scaleX(0.895);transform-origin:0 0;">Nationality</div>
<div style="left:645px;top:382px;width:288px;height:20px;background:#3c3c3c;border:1px solid #747474;box-sizing:border-box"></div>
<div class="t" style="left:647px;top:383.0px;line-height:16px;font-size:12px;transform:scaleX(0.895);transform-origin:0 0;">Doug</div>
<div style="left:645px;top:407px;width:288px;height:20px;background:#3c3c3c;border:1px solid #747474;box-sizing:border-box"></div>
<div class="t" style="left:647px;top:408.0px;line-height:16px;font-size:12px;transform:scaleX(0.895);transform-origin:0 0;">Duthie</div>
<div style="left:645px;top:431px;width:288px;height:20px;background:#3c3c3c;border:1px solid #747474;box-sizing:border-box"></div>
<div class="t" style="left:647px;top:432.0px;line-height:16px;font-size:12px;transform:scaleX(0.895);transform-origin:0 0;">Dr Doug</div>
<div style="left:646px;top:460px;width:287px;height:21px;background:#3c3c3c;border:1px solid #a0a0a0;box-sizing:border-box"></div>
<div style="left:648px;top:463px;width:57px;height:14px;background:#0078d7"></div>
<div class="t" style="left:648px;top:463.0px;line-height:16px;font-size:12px;transform:scaleX(0.895);transform-origin:0 0;color:#fff">GreatBritain</div>
<svg style="left:920px;top:468px" width="7" height="4"><path d="M0 0 H7 L3.5 4 Z" fill="#fff"/></svg>
<div style="left:511px;top:521px;width:11px;height:11px;background:#a0a0a0;border:1px solid #e8e8e8;box-sizing:border-box"></div>
<div class="t" style="left:528px;top:519.0px;line-height:16px;font-size:12px;transform:scaleX(0.895);transform-origin:0 0;">TEST : Developer mode</div>
<div style="left:1004px;top:375px;width:391px;height:149px;border:1px solid #dcdcdc;box-sizing:border-box"></div>
<div class="t" style="left:1011px;top:368.0px;line-height:16px;font-size:12px;transform:scaleX(0.87);transform-origin:0 0;"><span style="background:#3c3c3c;padding:0 2px">Overlays</span></div>
<div style="left:1015px;top:387px;width:11px;height:11px;background:#a0a0a0;border:1px solid #e8e8e8;box-sizing:border-box"></div>
<div class="t" style="left:1032px;top:385.0px;line-height:16px;font-size:12px;transform:scaleX(0.895);transform-origin:0 0;">Results summary</div>
<div style="left:1015px;top:410px;width:11px;height:11px;border:1px solid #262626;box-sizing:border-box"></div>
<div class="t" style="left:1032px;top:408.0px;line-height:16px;font-size:12px;transform:scaleX(0.895);transform-origin:0 0;color:#1e1e1e">Summary on PB only</div>
<div style="left:1013px;top:434px;width:11px;height:11px;background:#a0a0a0;border:1px solid #e8e8e8;box-sizing:border-box"></div>
<svg style="position:absolute;left:1013px;top:434px" width="11" height="11"><path d="M2.2 5.6 L4.6 8.8 L9 3.3" stroke="#fff" stroke-width="2" fill="none"/></svg>
<div class="t" style="left:1030px;top:432.0px;line-height:16px;font-size:12px;transform:scaleX(0.895);transform-origin:0 0;">Show fuel Widget</div>
<div style="left:1013px;top:457px;width:11px;height:11px;background:#a0a0a0;border:1px solid #e8e8e8;box-sizing:border-box"></div>
<svg style="position:absolute;left:1013px;top:457px" width="11" height="11"><path d="M2.2 5.6 L4.6 8.8 L9 3.3" stroke="#fff" stroke-width="2" fill="none"/></svg>
<div class="t" style="left:1030px;top:455.0px;line-height:16px;font-size:12px;transform:scaleX(0.895);transform-origin:0 0;">Show CPU Widget</div>
<div style="left:1013px;top:480px;width:11px;height:11px;background:#a0a0a0;border:1px solid #e8e8e8;box-sizing:border-box"></div>
<div class="t" style="left:1030px;top:478.0px;line-height:16px;font-size:12px;transform:scaleX(0.895);transform-origin:0 0;">Show SHM Widget</div>
<div style="left:1199px;top:387px;width:11px;height:11px;background:#a0a0a0;border:1px solid #e8e8e8;box-sizing:border-box"></div>
<svg style="position:absolute;left:1199px;top:387px" width="11" height="11"><path d="M2.2 5.6 L4.6 8.8 L9 3.3" stroke="#fff" stroke-width="2" fill="none"/></svg>
<div class="t" style="left:1216px;top:385.0px;line-height:16px;font-size:12px;transform:scaleX(0.895);transform-origin:0 0;">Show Laps Widget</div>
<div style="left:1199px;top:410px;width:11px;height:11px;background:#a0a0a0;border:1px solid #e8e8e8;box-sizing:border-box"></div>
<svg style="position:absolute;left:1199px;top:410px" width="11" height="11"><path d="M2.2 5.6 L4.6 8.8 L9 3.3" stroke="#fff" stroke-width="2" fill="none"/></svg>
<div class="t" style="left:1216px;top:408.0px;line-height:16px;font-size:12px;transform:scaleX(0.895);transform-origin:0 0;">Show Damage Widget</div>
<div style="left:1199px;top:434px;width:11px;height:11px;background:#a0a0a0;border:1px solid #e8e8e8;box-sizing:border-box"></div>
<svg style="position:absolute;left:1199px;top:434px" width="11" height="11"><path d="M2.2 5.6 L4.6 8.8 L9 3.3" stroke="#fff" stroke-width="2" fill="none"/></svg>
<div class="t" style="left:1216px;top:432.0px;line-height:16px;font-size:12px;transform:scaleX(0.895);transform-origin:0 0;">Show Leaderboard Widget</div>
<div style="left:1199px;top:457px;width:11px;height:11px;background:#a0a0a0;border:1px solid #e8e8e8;box-sizing:border-box"></div>
<svg style="position:absolute;left:1199px;top:457px" width="11" height="11"><path d="M2.2 5.6 L4.6 8.8 L9 3.3" stroke="#fff" stroke-width="2" fill="none"/></svg>
<div class="t" style="left:1216px;top:455.0px;line-height:16px;font-size:12px;transform:scaleX(0.895);transform-origin:0 0;">Show Corner Names Widget</div>
<div style="left:1199px;top:480px;width:11px;height:11px;background:#a0a0a0;border:1px solid #e8e8e8;box-sizing:border-box"></div>
<svg style="position:absolute;left:1199px;top:480px" width="11" height="11"><path d="M2.2 5.6 L4.6 8.8 L9 3.3" stroke="#fff" stroke-width="2" fill="none"/></svg>
<div class="t" style="left:1216px;top:478.0px;line-height:16px;font-size:12px;transform:scaleX(0.895);transform-origin:0 0;">Show Weather Widget</div>
<div style="left:1199px;top:496px;width:97px;height:23px;background:#3c3c3c;border:1px solid #fff;box-sizing:border-box"></div>
<div class="t" style="left:1199px;width:97px;text-align:center;top:500.5px;line-height:16px;font-size:12px;color:#f0f0f0"><span style="display:inline-block;transform:scaleX(0.895)">Appearance</span></div>
<div style="left:3px;top:693px;width:100px;height:16px;background:#e6e6e6;border:1px solid #bcbcbc;box-sizing:border-box"></div>
<div class="t" style="left:110px;top:694.0px;line-height:16px;font-size:12px;transform:scaleX(0.914);transform-origin:0 0;">CPU : 0.2% [3.2%]</div>
<div class="t" style="left:209px;top:694.0px;line-height:16px;font-size:12px;transform:scaleX(0.976);transform-origin:0 0;">Memory : 209 MB</div>
<svg style="left:309px;top:694px" width="15" height="16"><rect x="2" y="1" width="11" height="9" fill="#d8d8d8"/><rect x="3" y="2" width="9" height="6" fill="#9a9a9a"/><rect x="1" y="10" width="13" height="3" fill="#c8c8c8"/><rect x="5" y="13" width="5" height="2" fill="#707070"/></svg>
<div class="t" style="left:330px;top:694.0px;line-height:16px;font-size:12px;transform:scaleX(0.86);transform-origin:0 0;">Race</div>
<div class="t" style="left:362px;top:694.0px;line-height:16px;font-size:12px;transform:scaleX(0.913);transform-origin:0 0;">PostSession</div>
<div class="t" style="left:431px;top:694.0px;line-height:16px;font-size:12px;transform:scaleX(0.993);transform-origin:0 0;">User profile Default - ARC folder = E:\Users\Doug\OneDrive\Documents\Doug's Documents\Games\ARC\ACCResults\</div>
<svg style="left:1064px;top:700px" width="7" height="4"><path d="M0 0 H6 L3 3 Z" fill="#e0e0e0"/></svg>
<div class="t" style="left:1076px;top:694.0px;line-height:16px;font-size:12px;transform:scaleX(0.994);transform-origin:0 0;color:#000">English (United Kingdom)</div>
<div class="t" style="left:1221px;top:694.0px;line-height:16px;font-size:12px;transform:scaleX(0.948);transform-origin:0 0;color:#000">Race Mode</div>
<svg style="left:1286px;top:700px" width="7" height="4"><path d="M0 0 H6 L3 3 Z" fill="#e0e0e0"/></svg>
<div style="left:989px;top:712px;width:217px;height:1px;background:#8c8c8c"></div>
<div style="left:1404px;top:700px;width:2px;height:2px;background:#e0e0e0"></div>
<div style="left:1400px;top:704px;width:2px;height:2px;background:#e0e0e0"></div>
<div style="left:1404px;top:704px;width:2px;height:2px;background:#e0e0e0"></div>
<div style="left:1396px;top:708px;width:2px;height:2px;background:#e0e0e0"></div>
<div style="left:1400px;top:708px;width:2px;height:2px;background:#e0e0e0"></div>
<div style="left:1404px;top:708px;width:2px;height:2px;background:#e0e0e0"></div>
</div></body></html>
